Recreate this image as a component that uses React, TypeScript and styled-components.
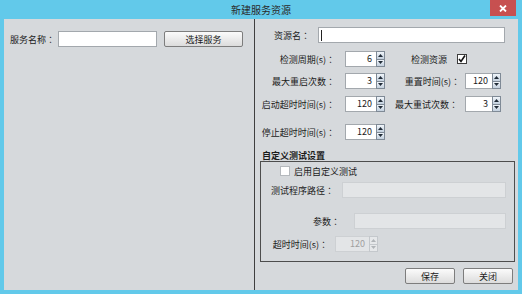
import React from "react";
import styled, { createGlobalStyle } from "styled-components";

const GlobalStyle = createGlobalStyle`
  html, body {
    margin: 0;
    padding: 0;
    background: #62c9ea;
  }
  body {
    font-family: "Noto Sans CJK SC", "Noto Sans", sans-serif;
    font-size: 9px;
    color: #1b1b1b;
  }
  * {
    box-sizing: border-box;
  }
`;

const Window = styled.div`
  width: 522px;
  height: 294px;
  display: flex;
  flex-direction: column;
  background: #62c9ea;
`;

const TitleBar = styled.div`
  height: 19px;
  display: grid;
  grid-template-columns: 1fr auto 1fr;
  align-items: start;
`;

const Title = styled.div`
  grid-column: 2;
  font-size: 10px;
  line-height: 19px;
  color: #2a2a2a;
`;

const CloseButton = styled.div`
  grid-column: 3;
  justify-self: end;
  margin-right: 6px;
  width: 26px;
  height: 16px;
  background: #c75050;
  display: flex;
  align-items: center;
  justify-content: center;
`;

const Body = styled.div`
  flex: 1;
  margin: 0 4px 4px 4px;
  display: flex;
  background: #d6d9dc;
`;

const LeftPanel = styled.div`
  width: 251px;
  border-right: 1px solid #3f3f3f;
  padding: 12px 0 0 6px;
`;

const RightPanel = styled.div`
  flex: 1;
  display: flex;
  flex-direction: column;
`;

const Row = styled.div<{ $mt?: number; $h?: number }>`
  display: flex;
  align-items: center;
  margin-top: ${(p) => p.$mt ?? 0}px;
  height: ${(p) => p.$h ?? 16}px;
`;

const Label = styled.div<{ $w: number; $pad?: number; $left?: boolean }>`
  width: ${(p) => p.$w}px;
  padding-right: ${(p) => p.$pad ?? 0}px;
  text-align: ${(p) => (p.$left ? "left" : "right")};
  white-space: nowrap;
  flex-shrink: 0;
`;

// full-width colon centred in its cell, as the original dialog draws it
const Colon = styled.span`
  font-family: "Noto Sans CJK TC", "Noto Sans CJK SC", sans-serif;
`;

const TextBox = styled.div<{ $w: number; $disabled?: boolean }>`
  width: ${(p) => p.$w}px;
  height: 16px;
  background: ${(p) => (p.$disabled ? "#e3e5e7" : "#ffffff")};
  border: 1px solid ${(p) => (p.$disabled ? "#cdd0d3" : "#a3a8ad")};
  display: flex;
  align-items: center;
  padding-left: 2px;
`;

const Caret = styled.span`
  width: 1px;
  height: 11px;
  background: #222;
`;

const Button = styled.div<{ $w: number; $ml?: number }>`
  width: ${(p) => p.$w}px;
  height: 16px;
  margin-left: ${(p) => p.$ml ?? 0}px;
  border: 1px solid #7d7d7d;
  border-radius: 2px;
  background: linear-gradient(#fbfbfb, #dcdcdc);
  display: flex;
  align-items: center;
  justify-content: center;
`;

const SpinnerBox = styled.div<{ $w: number }>`
  width: ${(p) => p.$w}px;
  height: 16px;
  display: flex;
`;

const SpinnerField = styled.div<{ $disabled?: boolean }>`
  flex: 1;
  background: ${(p) => (p.$disabled ? "#e3e5e7" : "#ffffff")};
  color: ${(p) => (p.$disabled ? "#a0a0a0" : "#1b1b1b")};
  border: 1px solid ${(p) => (p.$disabled ? "#cdd0d3" : "#a3a8ad")};
  border-right: none;
  text-align: right;
  padding-right: 4px;
  line-height: 14px;
`;

const Arrows = styled.div`
  width: 9px;
  display: flex;
  flex-direction: column;
`;

const ArrowButton = styled.div<{ $disabled?: boolean }>`
  flex: 1;
  border: 1px solid ${(p) => (p.$disabled ? "#c4c8cc" : "#7f8a96")};
  background: ${(p) =>
    p.$disabled ? "#e6e8ea" : "linear-gradient(#f0f5fa, #c3d0de)"};
  display: flex;
  align-items: center;
  justify-content: center;
  & + & {
    border-top: none;
  }
`;

const CheckBoxSquare = styled.div<{ $ml?: number; $light?: boolean }>`
  width: 10px;
  height: 10px;
  margin-left: ${(p) => p.$ml ?? 0}px;
  background: #ffffff;
  border: 1px solid ${(p) => (p.$light ? "#b5b9bd" : "#3c3c3c")};
  display: flex;
  align-items: center;
  justify-content: center;
  flex-shrink: 0;
`;

const GroupTitle = styled.div`
  margin: 10px 0 0 7px;
  height: 11px;
  line-height: 11px;
  font-weight: bold;
`;

const GroupBox = styled.div`
  margin-left: 5px;
  width: 255px;
  height: 101px;
  border: 1px solid #4d4d4d;
  display: flex;
  flex-direction: column;
`;

const CheckText = styled.span`
  margin-left: 4px;
`;

const Footer = styled.div`
  margin-top: 6px;
  display: flex;
  justify-content: flex-end;
  gap: 8px;
  padding-right: 5px;
`;

const Spinner = ({ value, w = 40, disabled }: { value: string; w?: number; disabled?: boolean }) => {
  const c = disabled ? "#b0b4b8" : "#1f2a36";
  return (
    <SpinnerBox $w={w}>
      <SpinnerField $disabled={disabled}>{value}</SpinnerField>
      <Arrows>
        <ArrowButton $disabled={disabled}>
          <svg width="5" height="3" viewBox="0 0 5 3">
            <path d="M2.5 0 L5 3 L0 3 Z" fill={c} />
          </svg>
        </ArrowButton>
        <ArrowButton $disabled={disabled}>
          <svg width="5" height="3" viewBox="0 0 5 3">
            <path d="M0 0 L5 0 L2.5 3 Z" fill={c} />
          </svg>
        </ArrowButton>
      </Arrows>
    </SpinnerBox>
  );
};

const FieldLabel = ({ text, w, pad, left }: { text: string; w: number; pad?: number; left?: boolean }) => (
  <Label $w={w} $pad={pad} $left={left}>
    {text}
    <Colon>：</Colon>
  </Label>
);

export default function App() {
  return (
    <>
      <GlobalStyle />
      <Window>
        <TitleBar>
          <Title>新建服务资源</Title>
          <CloseButton>
            <svg width="8" height="7" viewBox="0 0 8 7">
              <path d="M1 0.5 L7 6.5 M7 0.5 L1 6.5" stroke="#ffffff" strokeWidth="1.8" />
            </svg>
          </CloseButton>
        </TitleBar>
        <Body>
          <LeftPanel>
            <Row>
              <FieldLabel text="服务名称" w={48} left />
              <TextBox $w={99} />
              <Button $w={79} $ml={7}>选择服务</Button>
            </Row>
          </LeftPanel>
          <RightPanel>
            <Row $mt={8}>
              <FieldLabel text="资源名" w={63} pad={8} />
              <TextBox $w={187}>
                <Caret />
              </TextBox>
            </Row>
            <Row $mt={8}>
              <FieldLabel text="检测周期(s)" w={90} pad={10} />
              <Spinner value="6" />
              <Label $w={62}>检测资源</Label>
              <CheckBoxSquare $ml={10}>
                <svg width="8" height="8" viewBox="0 0 8 8">
                  <path d="M1 4 L3 6.5 L7 0.5" stroke="#111" strokeWidth="1.6" fill="none" />
                </svg>
              </CheckBoxSquare>
            </Row>
            <Row $mt={6}>
              <FieldLabel text="最大重启次数" w={90} pad={10} />
              <Spinner value="3" />
              <FieldLabel text="重置时间(s)" w={80} pad={5} />
              <Spinner value="120" w={36} />
            </Row>
            <Row $mt={7}>
              <FieldLabel text="启动超时时间(s)" w={90} pad={10} />
              <Spinner value="120" />
              <FieldLabel text="最大重试次数" w={80} pad={7} />
              <Spinner value="3" w={36} />
            </Row>
            <Row $mt={12}>
              <FieldLabel text="停止超时时间(s)" w={90} pad={10} />
              <Spinner value="120" />
            </Row>
            <GroupTitle>自定义测试设置</GroupTitle>
            <GroupBox>
              <Row $mt={3} $h={12}>
                <CheckBoxSquare $ml={19} $light />
                <CheckText>启用自定义测试</CheckText>
              </Row>
              <Row $mt={5}>
                <FieldLabel text="测试程序路径" w={81} pad={8} />
                <TextBox $w={164} $disabled />
              </Row>
              <Row $mt={15}>
                <FieldLabel text="参数" w={93} pad={14} />
                <TextBox $w={152} $disabled />
              </Row>
              <Row $mt={7}>
                <FieldLabel text="超时时间(s)" w={74} pad={7} />
                <Spinner value="120" w={43} disabled />
              </Row>
            </GroupBox>
            <Footer>
              <Button $w={50}>保存</Button>
              <Button $w={50}>关闭</Button>
            </Footer>
          </RightPanel>
        </Body>
      </Window>
    </>
  );
}
